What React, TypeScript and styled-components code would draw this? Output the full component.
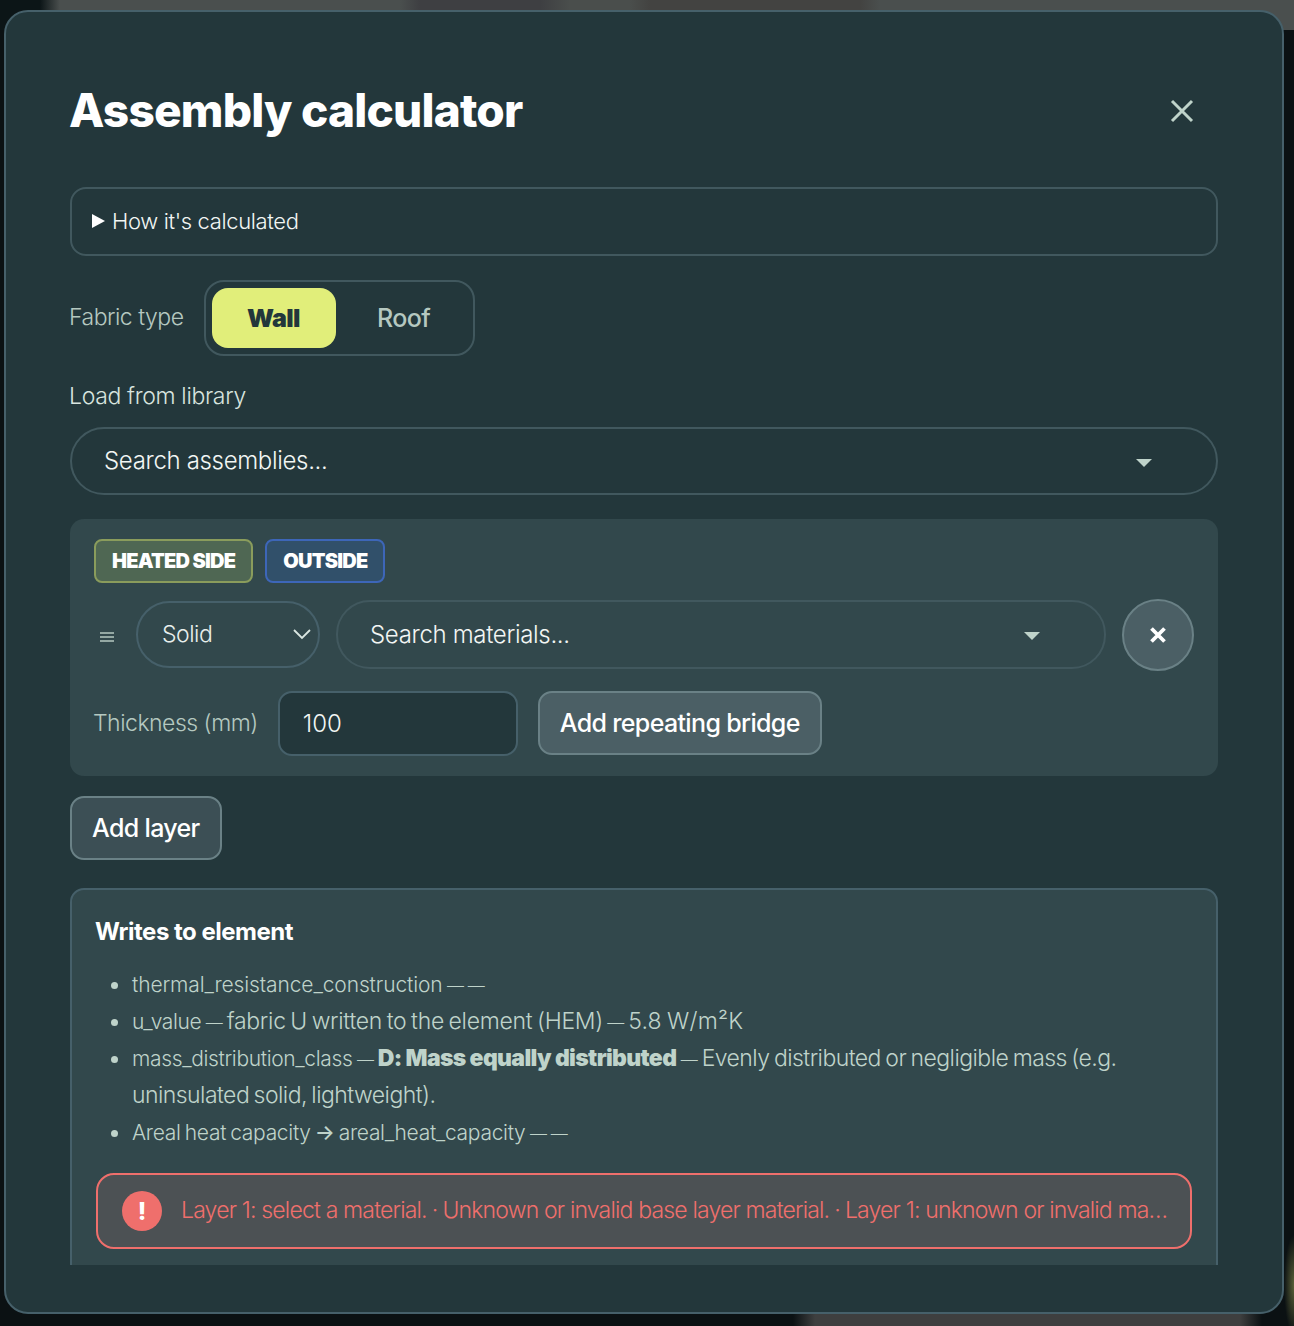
import React from "react";
import styled, { createGlobalStyle } from "styled-components";

const GlobalStyle = createGlobalStyle`
  * { box-sizing: border-box; }
  html, body { margin: 0; height: 100%; }
  body {
    overflow: hidden;
    font-family: Inter, "Liberation Sans", sans-serif;
    background: #0b1113;
  }
`;

export default function App() {
  return (
    <Backdrop>
      <GlobalStyle />
      <Modal>
        <Header>
          <Title>Assembly calculator</Title>
          <CloseButton aria-label="Close">
            <svg width="24" height="24" viewBox="0 0 24 24" fill="none" stroke="#bfd3ca" strokeWidth="3">
              <path d="M2 2 L22 22 M22 2 L2 22" />
            </svg>
          </CloseButton>
        </Header>
        <Body>
          <Details>
            <Caret />
            How it's calculated
          </Details>
          <FabricRow>
            <MutedLabel>Fabric type</MutedLabel>
            <Segment>
              <SegmentButton $active>Wall</SegmentButton>
              <SegmentButton>Roof</SegmentButton>
            </Segment>
          </FabricRow>
          <LibraryLabel>Load from library</LibraryLabel>
          <Combo>
            <ComboText>Search assemblies...</ComboText>
            <ComboArrow />
          </Combo>
          <LayerCard>
            <Tags>
              <Tag $border="#8a9c5c" $bg="#4f6753">HEATED SIDE</Tag>
              <Tag $border="#3d66b8" $bg="#31506a">OUTSIDE</Tag>
            </Tags>
            <LayerRow>
              <Handle>
                <svg width="14" height="10" viewBox="0 0 14 10" fill="none" stroke="#b5c8c0" strokeWidth="1.4">
                  <path d="M0 1 H14 M0 5 H14 M0 9 H14" />
                </svg>
              </Handle>
              <TypeSelect>
                Solid
                <svg width="20" height="12" viewBox="0 0 20 12" fill="none" stroke="#dbe7e2" strokeWidth="1.8">
                  <path d="M2 2 L10 10 L18 2" />
                </svg>
              </TypeSelect>
              <MaterialCombo>
                <ComboText>Search materials...</ComboText>
                <ComboArrow />
              </MaterialCombo>
              <RemoveButton aria-label="Remove layer">
                <svg width="18" height="18" viewBox="0 0 18 18" fill="none" stroke="#fff" strokeWidth="3.8">
                  <path d="M2.5 2.5 L15.5 15.5 M15.5 2.5 L2.5 15.5" />
                </svg>
              </RemoveButton>
            </LayerRow>
            <ThicknessRow>
              <MutedLabel>Thickness (mm)</MutedLabel>
              <NumberBox>100</NumberBox>
              <BridgeButton>Add repeating bridge</BridgeButton>
            </ThicknessRow>
          </LayerCard>
          <AddLayer>Add layer</AddLayer>
          <WritesCard>
            <WritesTitle>Writes to element</WritesTitle>
            <Bullets>
              <li><Small $spacing={-0.12}>thermal_resistance_construction</Small> <Dash>—</Dash> <Dash>—</Dash></li>
              <li>
                <Small>u_value</Small> <Dash>—</Dash> <Run $spacing={-0.3}>fabric U written to the element (HEM)</Run>{" "}
                <Dash>—</Dash> <Run $spacing={0.2}>5.8 W/m²K</Run>
              </li>
              <li>
                <Small>mass_distribution_class</Small> <Dash>—</Dash> <strong>D: Mass equally distributed</strong>{" "}
                <Dash>—</Dash> Evenly distributed or negligible mass (e.g. uninsulated solid, lightweight).
              </li>
              <li><Small $spacing={-0.3}>Areal heat capacity <Arrow>→</Arrow> areal_heat_capacity</Small> <Dash>—</Dash> <Dash>—</Dash></li>
            </Bullets>
            <ErrorBox>
              <ErrorIcon>!</ErrorIcon>
              <ErrorText>
                Layer 1: select a material.<Dot>·</Dot>Unknown or invalid base layer material.<Dot>·</Dot>Layer 1: unknown or invalid material.
              </ErrorText>
            </ErrorBox>
          </WritesCard>
        </Body>
      </Modal>
    </Backdrop>
  );
}

const Backdrop = styled.div`
  height: 1326px;
  padding: 10px 10px 12px 4px;
  background:
    radial-gradient(ellipse 10px 50px at 1294px 1285px, #5a6038 0, transparent 100%),
    linear-gradient(90deg, transparent 793px, #3e3f3f 815px, #3e3f3f 1240px, transparent 1262px) bottom / 100% 12px no-repeat,
    linear-gradient(90deg, #0c1517 40px, #4a4f4e 60px, #4a4f4e 400px, #3e3f42 420px, #3e3f42 540px, #4a4e4c 570px, #4a4e4c 630px, #434341 650px, #434341 860px, #4a4f4e 880px) top / 100% 30px no-repeat,
    #0b1113;
`;
const Modal = styled.div`
  height: 100%;
  background: #23373b;
  border: 2px solid #46606a;
  border-radius: 24px;
  padding: 0 64px 47px;
  display: flex;
  flex-direction: column;
  overflow: hidden;
`;
const Header = styled.header`
  height: 175px;
  flex: none;
  display: flex;
  align-items: center;
  justify-content: space-between;
  padding: 21px 24px 0 0;
`;
const Title = styled.h1`
  margin: 0 0 0 -1px;
  color: #fff;
  font-size: 46px;
  font-weight: 800;
  letter-spacing: -0.8px;
`;
const CloseButton = styled.button`
  background: none;
  border: none;
  padding: 0;
  margin-top: 2px;
  display: flex;
`;
const Body = styled.div`
  flex: 1;
  overflow: hidden;
  display: flex;
  flex-direction: column;
  align-items: flex-start;
`;
const Details = styled.div`
  width: 100%;
  height: 69px;
  flex: none;
  border: 2px solid #41585e;
  border-radius: 16px;
  padding: 0 0 2px 20px;
  display: flex;
  align-items: center;
  gap: 7px;
  color: #f2f6f4;
  font-size: 22px;
  font-weight: 300;
  letter-spacing: -0.35px;
`;
const Caret = styled.span`
  width: 0;
  height: 0;
  border-left: 13px solid #fff;
  border-top: 7.5px solid transparent;
  border-bottom: 7.5px solid transparent;
`;
const FabricRow = styled.div`
  margin-top: 24px;
  display: flex;
  align-items: center;
  gap: 20px;
  flex: none;
`;
const MutedLabel = styled.span`
  margin-left: -1px;
  color: #b5c8c0;
  font-size: 23px;
  font-weight: 300;
  letter-spacing: -0.5px;
  white-space: nowrap;
  padding-bottom: 2px;
`;
const Segment = styled.div`
  width: 271px;
  height: 76px;
  border: 2px solid #41585e;
  border-radius: 20px;
  padding: 6px;
  display: flex;
  gap: 6px;
`;
const SegmentButton = styled.button<{ $active?: boolean }>`
  width: 124px;
  height: 60px;
  border: none;
  border-radius: 16px;
  background: ${(p) => (p.$active ? "#e1ee7a" : "transparent")};
  color: ${(p) => (p.$active ? "#23373b" : "#b5c8c0")};
  font-family: inherit;
  font-size: 25px;
  font-weight: ${(p) => (p.$active ? 900 : 500)};
  letter-spacing: -0.6px;
`;
const LibraryLabel = styled.div`
  margin: 25px 0 0 -1px;
  color: #d8e4df;
  font-size: 23px;
  font-weight: 300;
  letter-spacing: -0.34px;
  line-height: 30px;
  flex: none;
`;
const Combo = styled.div`
  margin-top: 16px;
  width: 100%;
  height: 68px;
  flex: none;
  border: 2px solid #41585e;
  border-radius: 34px;
  padding: 0 64px 0 32px;
  display: flex;
  align-items: center;
  justify-content: space-between;
`;
const ComboText = styled.span`
  color: #f2f6f4;
  font-size: 24px;
  font-weight: 300;
  letter-spacing: -0.33px;
  padding-bottom: 2px;
`;
const ComboArrow = styled.span`
  width: 0;
  height: 0;
  margin-top: 3px;
  border-top: 8px solid #bfd3ca;
  border-left: 8px solid transparent;
  border-right: 8px solid transparent;
`;
const LayerCard = styled.section`
  margin-top: 24px;
  width: 100%;
  height: 257px;
  flex: none;
  background: #32484c;
  border-radius: 14px;
  padding: 20px 24px;
`;
const Tags = styled.div`
  display: flex;
  gap: 12px;
`;
const Tag = styled.span<{ $border: string; $bg: string }>`
  height: 44px;
  padding: 0 16px;
  display: flex;
  align-items: center;
  border: 2px solid ${(p) => p.$border};
  background: ${(p) => p.$bg};
  border-radius: 8px;
  color: #fff;
  font-size: 20px;
  font-weight: 900;
  letter-spacing: -0.76px;
`;
const LayerRow = styled.div`
  margin-top: 16px;
  display: flex;
  align-items: center;
`;
const Handle = styled.span`
  width: 42px;
  padding: 4px 0 0 6px;
  display: flex;
`;
const TypeSelect = styled.div`
  width: 184px;
  height: 67px;
  border: 2px solid #46606a;
  border-radius: 34px;
  padding: 0 6px 2px 24px;
  display: flex;
  align-items: center;
  justify-content: space-between;
  color: #e8efec;
  font-size: 23px;
  font-weight: 300;
  letter-spacing: -0.5px;
`;
const MaterialCombo = styled(Combo)`
  margin: 0 16px;
  flex: 1;
  width: auto;
  height: 69px;
  ${ComboText} { padding-bottom: 0; }
`;
const RemoveButton = styled.button`
  width: 72px;
  height: 72px;
  margin-bottom: -1px;
  flex: none;
  border-radius: 50%;
  border: 2px solid #6a8186;
  background: #4b5f65;
  display: flex;
  align-items: center;
  justify-content: center;
  padding: 0;
`;
const ThicknessRow = styled.div`
  margin-top: 21px;
  display: flex;
  align-items: center;
  gap: 20px;
`;
const NumberBox = styled.div`
  width: 240px;
  height: 65px;
  background: #23373b;
  border: 2px solid #46606a;
  border-radius: 14px;
  padding-left: 23px;
  display: flex;
  align-items: center;
  color: #f2f6f4;
  font-size: 24px;
  font-weight: 300;
`;
const SoftButton = styled.button`
  height: 64px;
  padding: 0 20px;
  background: #4b5f65;
  border: 2px solid #6a8186;
  border-radius: 14px;
  color: #fff;
  font-family: inherit;
  font-size: 25px;
  font-weight: 500;
  letter-spacing: -0.65px;
`;
const BridgeButton = styled(SoftButton)`
  align-self: flex-start;
`;
const AddLayer = styled(SoftButton)`
  margin-top: 20px;
  flex: none;
  background: #3c4f55;
`;
const WritesCard = styled.section`
  margin-top: 28px;
  width: 100%;
  flex: none;
  background: #32484c;
  border: 2px solid #46606a;
  border-radius: 14px;
  padding: 25px 24px 60px;
`;
const WritesTitle = styled.h3`
  margin: 0 0 0 -1px;
  color: #fff;
  font-size: 24px;
  font-weight: 700;
  line-height: 34px;
  letter-spacing: -0.5px;
`;
const Bullets = styled.ul`
  margin: 17px 0 0;
  padding-left: 36px;
  color: #bfd3ca;
  font-size: 23px;
  font-weight: 300;
  line-height: 37px;
  letter-spacing: -0.55px;
  word-spacing: -1.5px;
  strong { font-weight: 900; letter-spacing: -0.66px; word-spacing: 0; }
`;
const Small = styled.span<{ $spacing?: number }>`
  font-size: 21px;
  line-height: 1;
  letter-spacing: ${(p) => p.$spacing ?? -0.35}px;
`;
const Run = styled.span<{ $spacing: number }>`
  letter-spacing: ${(p) => p.$spacing}px;
`;
const Dash = styled.span`
  font-size: 17px;
  line-height: 1;
`;
const Arrow = styled.span`
  font-weight: 500;
`;
const ErrorBox = styled.div`
  margin-top: 22px;
  height: 76px;
  background: #4c5154;
  border: 2px solid #ef6f6c;
  border-radius: 18px;
  padding: 0 20px 0 24px;
  display: flex;
  align-items: center;
  gap: 19px;
`;
const ErrorIcon = styled.span`
  width: 40px;
  height: 40px;
  flex: none;
  border-radius: 50%;
  background: #ef6f6c;
  color: #fff;
  font-size: 24px;
  font-weight: 800;
  display: flex;
  align-items: center;
  justify-content: center;
`;
const ErrorText = styled.span`
  color: #ef6f6c;
  font-size: 23px;
  font-weight: 300;
  letter-spacing: -0.82px;
  white-space: nowrap;
  overflow: hidden;
  text-overflow: ellipsis;
  padding-bottom: 3px;
`;
const Dot = styled.span`
  margin: 0 5px;
`;
